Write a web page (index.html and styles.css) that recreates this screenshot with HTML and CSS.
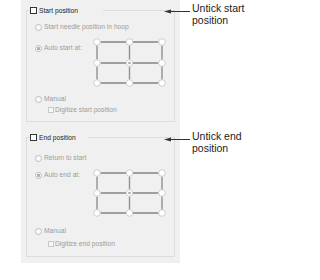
FILE: index.html
```html
<!DOCTYPE html>
<html>
<head>
<meta charset="utf-8">
<link rel="stylesheet" href="styles.css">
</head>
<body>
<div class="panel">
  <div class="group">
    <div class="group-head head-start">
      <span class="check check-on"></span><span class="head-label">Start position</span>
    </div>
    <div class="opt opt-first">
      <span class="radio"></span><span>Start needle position in hoop</span>
    </div>
    <div class="auto-row">
      <div class="opt auto-opt auto-start">
        <span class="radio radio-checked"></span><span>Auto start at:</span>
      </div>
      <svg class="matrix" width="73" height="49" viewBox="0 0 73 49">
        <g class="mline-h">
          <line x1="7.5" y1="4" x2="33" y2="4"/><line x1="40" y1="4" x2="65.5" y2="4"/>
          <line x1="7.5" y1="25" x2="33" y2="25"/><line x1="40" y1="25" x2="65.5" y2="25"/>
          <line x1="7.5" y1="45" x2="33" y2="45"/><line x1="40" y1="45" x2="65.5" y2="45"/>
        </g>
        <g class="mline-v">
          <line x1="4" y1="7.5" x2="4" y2="21.5"/><line x1="36.5" y1="7.5" x2="36.5" y2="21.5"/><line x1="69" y1="7.5" x2="69" y2="21.5"/>
          <line x1="4" y1="28.5" x2="4" y2="41.5"/><line x1="36.5" y1="28.5" x2="36.5" y2="41.5"/><line x1="69" y1="28.5" x2="69" y2="41.5"/>
        </g>
        <g class="mnode">
          <circle cx="4" cy="4" r="3.3"/><circle cx="36.5" cy="4" r="3.3"/><circle cx="69" cy="4" r="3.3"/>
          <circle cx="4" cy="25" r="3.3"/><circle cx="36.5" cy="25" r="3.3"/><circle cx="69" cy="25" r="3.3"/>
          <circle cx="4" cy="45" r="3.3"/><circle cx="36.5" cy="45" r="3.3"/><circle cx="69" cy="45" r="3.3"/>
        </g>
        <circle class="mdot" cx="36.5" cy="25" r="1.3"/>
      </svg>
    </div>
    <div class="opt manual-start">
      <span class="radio"></span><span>Manual</span>
    </div>
    <div class="opt sub-opt digitize-start">
      <span class="check check-off"></span><span>Digitize start position</span>
    </div>
  </div>

  <div class="group group-end">
    <div class="group-head head-end">
      <span class="check check-on"></span><span class="head-label">End position</span>
    </div>
    <div class="opt opt-first-end">
      <span class="radio"></span><span>Return to start</span>
    </div>
    <div class="auto-row">
      <div class="opt auto-opt auto-end">
        <span class="radio radio-checked"></span><span>Auto end at:</span>
      </div>
      <svg class="matrix" width="73" height="48" viewBox="0 0 73 48">
        <g class="mline-h">
          <line x1="7.5" y1="4" x2="33" y2="4"/><line x1="40" y1="4" x2="65.5" y2="4"/>
          <line x1="7.5" y1="24" x2="33" y2="24"/><line x1="40" y1="24" x2="65.5" y2="24"/>
          <line x1="7.5" y1="44" x2="33" y2="44"/><line x1="40" y1="44" x2="65.5" y2="44"/>
        </g>
        <g class="mline-v">
          <line x1="4" y1="7.5" x2="4" y2="20.5"/><line x1="36.5" y1="7.5" x2="36.5" y2="20.5"/><line x1="69" y1="7.5" x2="69" y2="20.5"/>
          <line x1="4" y1="27.5" x2="4" y2="40.5"/><line x1="36.5" y1="27.5" x2="36.5" y2="40.5"/><line x1="69" y1="27.5" x2="69" y2="40.5"/>
        </g>
        <g class="mnode">
          <circle cx="4" cy="4" r="3.3"/><circle cx="36.5" cy="4" r="3.3"/><circle cx="69" cy="4" r="3.3"/>
          <circle cx="4" cy="24" r="3.3"/><circle cx="36.5" cy="24" r="3.3"/><circle cx="69" cy="24" r="3.3"/>
          <circle cx="4" cy="44" r="3.3"/><circle cx="36.5" cy="44" r="3.3"/><circle cx="69" cy="44" r="3.3"/>
        </g>
        <circle class="mdot" cx="36.5" cy="24" r="1.3"/>
      </svg>
    </div>
    <div class="opt manual-end">
      <span class="radio"></span><span>Manual</span>
    </div>
    <div class="opt sub-opt digitize-end">
      <span class="check check-off"></span><span>Digitize end position</span>
    </div>
  </div>
</div>

<div class="callout callout-start">
  <svg class="arrow" width="27" height="12" viewBox="0 0 27 12">
    <line x1="5" y1="9.5" x2="26" y2="9.5"/>
    <polygon points="0,9.5 7,7.6 7,11.4"/>
  </svg>
  <div class="callout-text">Untick start<br>position</div>
</div>
<div class="callout callout-end">
  <svg class="arrow" width="27" height="12" viewBox="0 0 27 12">
    <line x1="5" y1="9.5" x2="26" y2="9.5"/>
    <polygon points="0,9.5 7,7.6 7,11.4"/>
  </svg>
  <div class="callout-text">Untick end<br>position</div>
</div>
</body>
</html>
```

FILE: styles.css
```css
html, body {
  margin: 0;
  padding: 0;
  background: #ffffff;
}

body {
  font-family: "Liberation Sans", Arial, sans-serif;
  position: relative;
  width: 271px;
  height: 280px;
  overflow: hidden;
}

.panel {
  margin-left: 21px;
  width: 159px;
  box-sizing: border-box;
  padding: 10px 5px 6px 5px;
  background: #f0f0f0;
}

.group {
  border: 1px solid #dcdcdc;
  padding: 0 0 7px 8px;
}

.group-end {
  margin-top: 15px;
  padding-bottom: 8px;
}

.group-head {
  display: flex;
  align-items: center;
  gap: 2px;
  height: 9px;
  margin: -5px 0 0 -5px;
  background: #f0f0f0;
  font-size: 6.7px;
  line-height: 9px;
  color: #1a1a1a;
}

.head-start { width: 73px; }
.head-end { width: 58px; }

.check {
  display: block;
  flex: none;
  box-sizing: border-box;
}

.check-on {
  width: 7px;
  height: 7px;
  border: 1px solid #333333;
  background: #ffffff;
}

.check-off {
  width: 6px;
  height: 6px;
  border: 1px solid #c8c8c8;
  background: #f7f7f7;
}

.opt {
  display: flex;
  align-items: center;
  gap: 2px;
  height: 8px;
  font-size: 6.7px;
  line-height: 8px;
  color: #9c9c9c;
  white-space: nowrap;
}

.radio {
  display: block;
  flex: none;
  width: 7px;
  height: 7px;
  box-sizing: border-box;
  border: 1px solid #bdbdbd;
  border-radius: 50%;
  background: #fafafa;
}

.radio-checked {
  background: radial-gradient(circle, #adadad 0 1.3px, #fafafa 1.8px);
}

.opt-first { margin-top: 8px; }
.opt-first-end { margin-top: 12px; }

.auto-row {
  display: flex;
  align-items: flex-start;
  margin-top: 7px;
}

.auto-opt { width: 58px; }
.auto-start { margin-top: 6px; }
.auto-end { margin-top: 2px; }

.matrix { display: block; flex: none; }

.mline-h line {
  stroke: #909090;
  stroke-width: 1.7;
}

.mline-v line {
  stroke: #909090;
  stroke-width: 1.4;
}

.mnode circle {
  fill: #ffffff;
  stroke: #c4c4c4;
  stroke-width: 0.8;
}

.mdot { fill: #a8a8a8; }

.manual-start { margin-top: 8px; }
.manual-end { margin-top: 10px; }

.sub-opt {
  padding-left: 13px;
  gap: 1px;
}

.digitize-start { margin-top: 3px; }
.digitize-end { margin-top: 5px; }

.callout {
  position: absolute;
  left: 164px;
  display: flex;
  align-items: flex-start;
  font-size: 10.5px;
  line-height: 12px;
  color: #222222;
}

.callout-start { top: 2px; }
.callout-end { top: 130px; }

.arrow { display: block; flex: none; }
.arrow line { stroke: #333333; stroke-width: 1; }
.arrow polygon { fill: #333333; }

.callout-text {
  margin-left: 1px;
  white-space: nowrap;
}
```
